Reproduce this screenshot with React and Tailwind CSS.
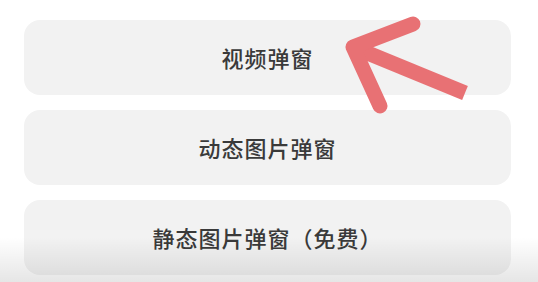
import React from "react";

const items = ["视频弹窗", "动态图片弹窗", "静态图片弹窗（免费）"];

export default function App() {
  return (
    <div
      className="relative w-[538px] h-[282px] overflow-hidden bg-white"
      style={{ fontFamily: '"Noto Sans CJK SC", "Noto Sans", sans-serif' }}
    >
      <div className="flex flex-col gap-[15px] pt-[20px] pl-[24px]">
        {items.map((t) => (
          <button
            key={t}
            className="w-[487px] h-[75px] rounded-[16px] bg-[#f2f2f2] flex items-center justify-center text-[22px] tracking-[1px] font-medium text-[#3a3a3a]"
          >
            {t}
          </button>
        ))}
      </div>

      {/* bottom shading */}
      <div className="pointer-events-none absolute left-0 right-0 bottom-0 h-[45px] bg-gradient-to-b from-transparent to-black/10" />

      {/* arrow */}
      <svg
        className="pointer-events-none absolute left-0 top-0"
        width="538"
        height="282"
        viewBox="0 0 538 282"
      >
        <g stroke="#e87174" strokeWidth="15" fill="none" strokeLinejoin="round">
          <path d="M465 93 L353 47" strokeLinecap="butt" />
          <path d="M413 24 L353 47 L380 106" strokeLinecap="round" />
        </g>
      </svg>
    </div>
  );
}
